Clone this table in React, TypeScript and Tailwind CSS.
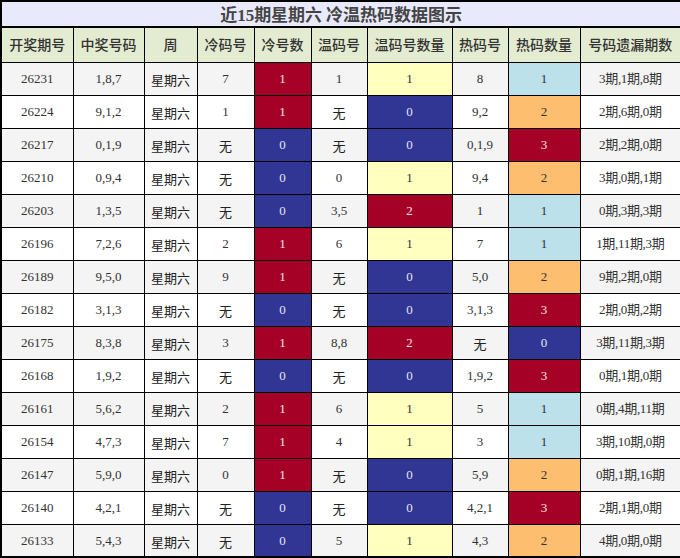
import React from 'react';

type Row = {
  issue: string;
  nums: string;
  coldNum: string;
  coldCnt: number;
  warmNum: string;
  warmCnt: number;
  hotNum: string;
  hotCnt: number;
  miss: string;
};

const rows: Row[] = [
  { issue: '26231', nums: '1,8,7', coldNum: '7', coldCnt: 1, warmNum: '1', warmCnt: 1, hotNum: '8', hotCnt: 1, miss: '3期,1期,8期' },
  { issue: '26224', nums: '9,1,2', coldNum: '1', coldCnt: 1, warmNum: '无', warmCnt: 0, hotNum: '9,2', hotCnt: 2, miss: '2期,6期,0期' },
  { issue: '26217', nums: '0,1,9', coldNum: '无', coldCnt: 0, warmNum: '无', warmCnt: 0, hotNum: '0,1,9', hotCnt: 3, miss: '2期,2期,0期' },
  { issue: '26210', nums: '0,9,4', coldNum: '无', coldCnt: 0, warmNum: '0', warmCnt: 1, hotNum: '9,4', hotCnt: 2, miss: '3期,0期,1期' },
  { issue: '26203', nums: '1,3,5', coldNum: '无', coldCnt: 0, warmNum: '3,5', warmCnt: 2, hotNum: '1', hotCnt: 1, miss: '0期,3期,3期' },
  { issue: '26196', nums: '7,2,6', coldNum: '2', coldCnt: 1, warmNum: '6', warmCnt: 1, hotNum: '7', hotCnt: 1, miss: '1期,11期,3期' },
  { issue: '26189', nums: '9,5,0', coldNum: '9', coldCnt: 1, warmNum: '无', warmCnt: 0, hotNum: '5,0', hotCnt: 2, miss: '9期,2期,0期' },
  { issue: '26182', nums: '3,1,3', coldNum: '无', coldCnt: 0, warmNum: '无', warmCnt: 0, hotNum: '3,1,3', hotCnt: 3, miss: '2期,0期,2期' },
  { issue: '26175', nums: '8,3,8', coldNum: '3', coldCnt: 1, warmNum: '8,8', warmCnt: 2, hotNum: '无', hotCnt: 0, miss: '3期,11期,3期' },
  { issue: '26168', nums: '1,9,2', coldNum: '无', coldCnt: 0, warmNum: '无', warmCnt: 0, hotNum: '1,9,2', hotCnt: 3, miss: '0期,1期,0期' },
  { issue: '26161', nums: '5,6,2', coldNum: '2', coldCnt: 1, warmNum: '6', warmCnt: 1, hotNum: '5', hotCnt: 1, miss: '0期,4期,11期' },
  { issue: '26154', nums: '4,7,3', coldNum: '7', coldCnt: 1, warmNum: '4', warmCnt: 1, hotNum: '3', hotCnt: 1, miss: '3期,10期,0期' },
  { issue: '26147', nums: '5,9,0', coldNum: '0', coldCnt: 1, warmNum: '无', warmCnt: 0, hotNum: '5,9', hotCnt: 2, miss: '0期,1期,16期' },
  { issue: '26140', nums: '4,2,1', coldNum: '无', coldCnt: 0, warmNum: '无', warmCnt: 0, hotNum: '4,2,1', hotCnt: 3, miss: '2期,1期,0期' },
  { issue: '26133', nums: '5,4,3', coldNum: '无', coldCnt: 0, warmNum: '5', warmCnt: 1, hotNum: '4,3', hotCnt: 2, miss: '4期,0期,0期' },
];

const headers = ['开奖期号', '中奖号码', '周', '冷码号', '冷号数', '温码号', '温码号数量', '热码号', '热码数量', '号码遗漏期数'];
const widths = [72, 71, 53, 57, 57, 56, 85, 56, 72, 101];

// colour for a count cell, keyed by column
const RED = 'bg-[#a50026] text-[#f0e6e8]';
const BLUE = 'bg-[#313695] text-[#e4e6f2]';
const YELLOW = 'bg-[#ffffbf] text-[#333]';
const LBLUE = 'bg-[#bde1ea] text-[#333]';
const ORANGE = 'bg-[#fdbf6f] text-[#333]';

function coldCls(n: number) {
  return n === 1 ? RED : BLUE;
}
function warmCls(n: number) {
  if (n === 0) return BLUE;
  if (n === 1) return YELLOW;
  return RED;
}
function hotCls(n: number) {
  if (n === 0) return BLUE;
  if (n === 1) return LBLUE;
  if (n === 2) return ORANGE;
  return RED;
}

const num = "font-['Liberation_Serif','Noto_Sans_CJK_SC',serif] text-[13px]";
const cjk = "font-['Noto_Sans_CJK_SC',sans-serif] text-[13px] pt-[2px]";

export default function App() {
  return (
    <div className="w-[680px] h-[558px] overflow-hidden bg-white">
      <table className="w-[680px] table-fixed border-collapse border-2 border-black text-center text-[#333]">
        <colgroup>
          {widths.map((w, i) => (
            <col key={i} style={{ width: w }} />
          ))}
        </colgroup>
        <thead>
          <tr className="h-[26px]">
            <th
              colSpan={10}
              className="border-2 border-black bg-[#e8eafc] p-0 text-[17px] font-bold leading-none text-[#444] font-['Liberation_Serif','Noto_Sans_CJK_SC',serif]"
            >
              <span className="font-['Noto_Sans_CJK_SC',sans-serif]">近</span>
              15
              <span className="font-['Noto_Sans_CJK_SC',sans-serif]">期星期六 冷温热码数据图示</span>
            </th>
          </tr>
          <tr className="h-[35px]">
            {headers.map((h) => (
              <th
                key={h}
                className="border border-black bg-[#e3ecd0] p-0 text-[14px] font-medium text-[#333] font-['Noto_Sans_CJK_SC',sans-serif]"
              >
                {h}
              </th>
            ))}
          </tr>
        </thead>
        <tbody>
          {rows.map((r, i) => (
            <tr key={r.issue} className={`h-[33px] ${i % 2 === 0 ? 'bg-[#f4f4f4]' : 'bg-white'}`}>
              <td className={`border border-black p-0 ${num}`}>{r.issue}</td>
              <td className={`border border-black p-0 ${num}`}>{r.nums}</td>
              <td className={`border border-black p-0 ${cjk} text-[#222]`}>星期六</td>
              <td className={`border border-black p-0 ${r.coldNum === '无' ? cjk + ' text-[#222]' : num}`}>{r.coldNum}</td>
              <td className={`border border-black p-0 ${num} ${coldCls(r.coldCnt)}`}>{r.coldCnt}</td>
              <td className={`border border-black p-0 ${r.warmNum === '无' ? cjk + ' text-[#222]' : num}`}>{r.warmNum}</td>
              <td className={`border border-black p-0 ${num} ${warmCls(r.warmCnt)}`}>{r.warmCnt}</td>
              <td className={`border border-black p-0 ${r.hotNum === '无' ? cjk + ' text-[#222]' : num}`}>{r.hotNum}</td>
              <td className={`border border-black p-0 ${num} ${hotCls(r.hotCnt)}`}>{r.hotCnt}</td>
              <td className={`border border-black p-0 ${num} tracking-[-0.3px]`}>{r.miss}</td>
            </tr>
          ))}
        </tbody>
      </table>
    </div>
  );
}
